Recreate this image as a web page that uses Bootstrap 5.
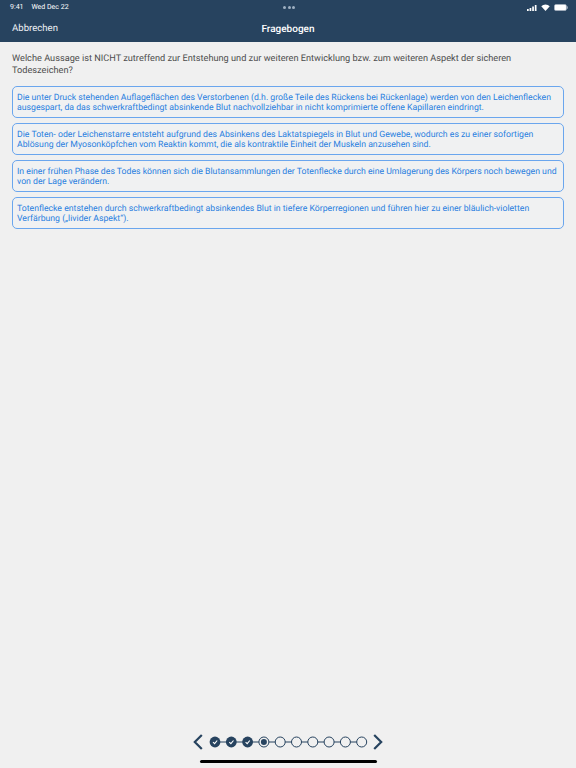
<!doctype html>
<html lang="de"><head><meta charset="utf-8"><title>Fragebogen</title>
<link href="https://cdn.jsdelivr.net/npm/bootstrap@5.3.0/dist/css/bootstrap.min.css" rel="stylesheet">
<style>
html,body{height:100%;}
body{background:#f0f0f0;font-family:Roboto,"Liberation Sans",sans-serif;color:#444;overflow:hidden;text-rendering:geometricPrecision;}
.app-frame{height:768px;}
.top-head{background:#27435f;color:#fff;height:42px;flex:none;}
.status-row{height:14px;padding:1px 8px 0 10px;font-size:7px;}
.status-side{flex:1 1 0;}
.status-dots{gap:1.5px;}
.status-dots i{width:3px;height:3px;border-radius:50%;background:#9fb0c2;display:block;}
.title-row{height:28px;padding:2px 12px 0;}
.cancel-txt{font-size:9.6px;color:#eef1f5;}
.title-txt{font-size:10px;font-weight:500;}
.question-txt{font-size:9.2px;line-height:11.5px;color:#4d4d4d;margin:11px 12px 10px;}
.answers{gap:5px;margin:0 12px;}
.answer-box{border:1px solid #6aa6ee;border-radius:5px;background:#f0f1f2;color:#2a7fe0;font-size:8.7px;line-height:10px;padding:6px 4px 5px;height:32px;}
.home-bar{width:177px;height:3px;background:#000;border-radius:2px;margin-bottom:5px;}
.pager-svg{margin-bottom:10px;}
</style></head>
<body>
<div class="app-frame d-flex flex-column">
  <header class="top-head d-flex flex-column">
    <div class="status-row d-flex justify-content-between align-items-center">
      <div class="status-side"><span>9:41</span><span class="ms-2">Wed Dec 22</span></div>
      <div class="status-dots d-flex"><i></i><i></i><i></i></div>
      <div class="status-side d-flex justify-content-end align-items-center gap-1">
        <svg width="10" height="6" viewBox="0 0 10 6" fill="#fff"><rect x="0" y="4" width="1.7" height="2"/><rect x="2.6" y="3" width="1.7" height="3"/><rect x="5.2" y="1.5" width="1.7" height="4.5"/><rect x="7.8" y="0" width="1.7" height="6"/></svg>
        <svg width="9" height="7" viewBox="0 0 18 14"><path d="M9 14 L0.5 4.5 A12.5 12.5 0 0 1 17.5 4.5 Z" fill="#fff"/></svg>
        <svg width="14" height="7" viewBox="0 0 14 7"><rect x=".4" y=".4" width="12" height="6.2" rx="1.6" fill="#fff" stroke="#aab6c3" stroke-width=".6"/><rect x="12.8" y="2.3" width="1" height="2.4" rx=".5" fill="#aab6c3"/></svg>
      </div>
    </div>
    <div class="title-row position-relative d-flex align-items-center justify-content-center">
      <a class="cancel-txt position-absolute start-0 text-decoration-none ms-2 ps-1">Abbrechen</a>
      <span class="title-txt">Fragebogen</span>
    </div>
  </header>
  <main class="flex-grow-1">
    <p class="question-txt">Welche Aussage ist NICHT zutreffend zur Entstehung und zur weiteren Entwicklung bzw. zum weiteren Aspekt der sicheren Todeszeichen?</p>
    <div class="answers d-flex flex-column">
      <div class="answer-box">Die unter Druck stehenden Auflageflächen des Verstorbenen (d.h. große Teile des Rückens bei Rückenlage) werden von den Leichenflecken ausgespart, da das schwerkraftbedingt absinkende Blut nachvollziehbar in nicht komprimierte offene Kapillaren eindringt.</div>
      <div class="answer-box">Die Toten- oder Leichenstarre entsteht aufgrund des Absinkens des Laktatspiegels in Blut und Gewebe, wodurch es zu einer sofortigen Ablösung der Myosonköpfchen vom Reaktin kommt, die als kontraktile Einheit der Muskeln anzusehen sind.</div>
      <div class="answer-box">In einer frühen Phase des Todes können sich die Blutansammlungen der Totenflecke durch eine Umlagerung des Körpers noch bewegen und von der Lage verändern.</div>
      <div class="answer-box">Totenflecke entstehen durch schwerkraftbedingt absinkendes Blut in tiefere Körperregionen und führen hier zu einer bläulich-violetten Verfärbung („livider Aspekt“).</div>
    </div>
  </main>
  <div class="d-flex flex-column align-items-center">
    <svg class="pager-svg" width="192" height="16" viewBox="0 0 192 16" fill="none">
      <path d="M9.8 1 L2.8 8 L9.8 15" stroke="#27435f" stroke-width="2.2"/>
      <path d="M182.2 1 L189.2 8 L182.2 15" stroke="#27435f" stroke-width="2.2"/>
      <line x1="22" y1="8" x2="169" y2="8" stroke="#27435f" stroke-width="1"/>
      <g fill="#27435f"><circle cx="23" cy="8" r="5.4"/><circle cx="39.3" cy="8" r="5.4"/><circle cx="55.6" cy="8" r="5.4"/></g>
      <g stroke="#fff" stroke-width="1.1"><path d="M21 8.1 L22.6 9.6 L25.2 6.5"/><path d="M37.3 8.1 L38.9 9.6 L41.5 6.5"/><path d="M53.6 8.1 L55.2 9.6 L57.8 6.5"/></g>
      <circle cx="71.9" cy="8" r="5" fill="#f0f0f0" stroke="#27435f"/><circle cx="71.9" cy="8" r="3" fill="#27435f"/>
      <g fill="#f0f0f0" stroke="#27435f"><circle cx="88.2" cy="8" r="5"/><circle cx="104.5" cy="8" r="5"/><circle cx="120.8" cy="8" r="5"/><circle cx="137.1" cy="8" r="5"/><circle cx="153.4" cy="8" r="5"/><circle cx="169.7" cy="8" r="5"/></g>
    </svg>
    <div class="home-bar"></div>
  </div>
</div>
<script src="https://cdn.jsdelivr.net/npm/bootstrap@5.3.0/dist/js/bootstrap.bundle.min.js"></script>
</body></html>
